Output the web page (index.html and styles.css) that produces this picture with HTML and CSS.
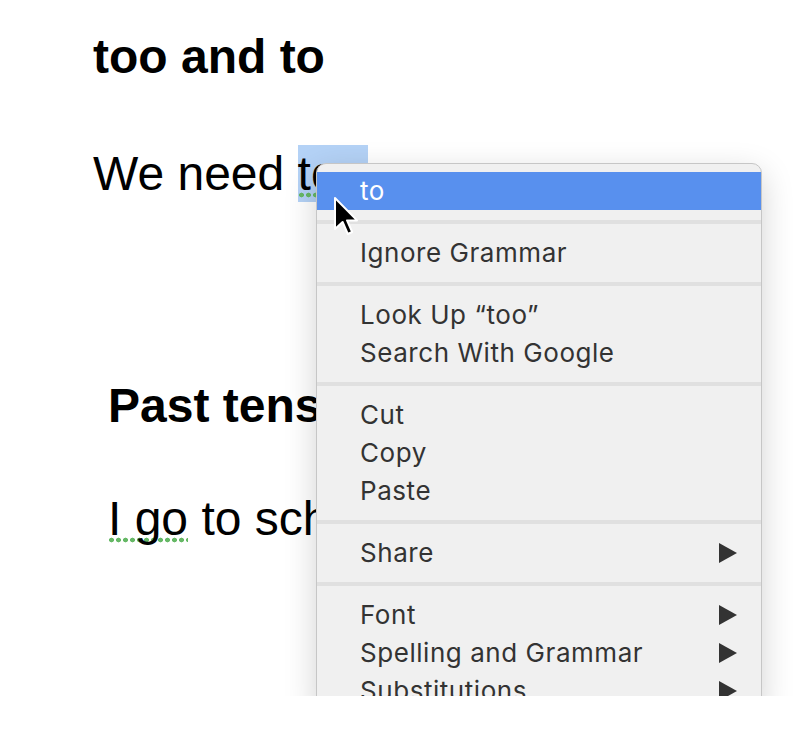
FILE: index.html
```html
<!DOCTYPE html>
<html lang="en">
<head>
    <meta charset="UTF-8">
    <meta name="viewport" content="width=device-width, initial-scale=1.0">
    <title>too and to</title>
    <link rel="stylesheet" href="styles.css">
</head>
<body>
    <div class="screen">
        <main class="doc">
            <h1 class="title">too and to</h1>
            <p class="line">We need <span class="sel grammar">too</span> go now.</p>

            <section class="example">
                <h2 class="title">Past tense</h2>
                <p class="line"><span class="grammar">I go</span> to school yesterday.</p>
            </section>
        </main>

        <!-- context menu over the document -->
        <div class="menu">
            <div class="item active">to</div>
            <div class="sep"></div>
            <div class="item">Ignore Grammar</div>
            <div class="sep"></div>
            <div class="item">Look Up “too”</div>
            <div class="item">Search With Google</div>
            <div class="sep"></div>
            <div class="item">Cut</div>
            <div class="item">Copy</div>
            <div class="item">Paste</div>
            <div class="sep"></div>
            <div class="item sub">Share <svg class="arrow" width="18" height="20" viewBox="0 0 18 20"><polygon points="0,0 18,10 0,20" /></svg></div>
            <div class="sep"></div>
            <div class="item sub">Font <svg class="arrow" width="18" height="20" viewBox="0 0 18 20"><polygon points="0,0 18,10 0,20" /></svg></div>
            <div class="item sub">Spelling and Grammar <svg class="arrow" width="18" height="20" viewBox="0 0 18 20"><polygon points="0,0 18,10 0,20" /></svg></div>
            <div class="item sub">Substitutions <svg class="arrow" width="18" height="20" viewBox="0 0 18 20"><polygon points="0,0 18,10 0,20" /></svg></div>
        </div>

        <!-- mouse pointer -->
        <svg class="cursor" width="26" height="40" viewBox="0 0 13 20">
            <polygon points="1,1 1,16.5 4.8,13 7.4,19 9.6,18 7,12.2 12,12.2" fill="#000" stroke="#fff" stroke-width="1" stroke-linejoin="round" />
        </svg>
    </div>
</body>
</html>
```

FILE: styles.css
```css
body { margin: 0; background: #fff; }
.screen { position: relative; height: 696px; overflow: hidden; }

/* document */
.doc { padding: 28px 0 0 93px; font-family: "Liberation Sans", Arial, sans-serif; color: #000; }
.title { margin: 0; font-size: 48px; line-height: 58px; font-weight: bold; }
.line { margin: 59px 0 0; font-size: 48px; line-height: 58px; white-space: nowrap; }
.example { margin-top: 174px; padding-left: 15px; }
.example .line { margin-top: 55px; }
.sel { background-color: #b4d2f6; padding: 2px 4px 2px 0; }
.grammar {
    background-image: radial-gradient(circle at 3.5px 3px, #66b866 2.1px, transparent 2.7px);
    background-size: 7px 6px;
    background-repeat: repeat-x;
    background-position: 0 45px;
}
.sel.grammar { background-position: 0 47px; }

/* context menu */
.menu {
    position: absolute; left: 316px; top: 163px; width: 444px;
    padding-top: 8px;
    background: #f0f0f0; border: 1px solid #c6c6c6; border-radius: 10px;
    box-shadow: 0 10px 32px rgba(0, 0, 0, 0.18);
    font-family: Inter, "Noto Sans", sans-serif; font-size: 26px; letter-spacing: 0.55px; color: #333;
}
.item { height: 38px; line-height: 38px; padding: 0 24px 0 43px; display: flex; align-items: center; justify-content: space-between; white-space: nowrap; }
.item.active { background: #5890ee; color: #fff; }
.sep { height: 4px; margin: 10px 0; background: #e0e0e0; }
.arrow { fill: #333; }

.cursor { position: absolute; left: 333px; top: 196px; }
```
